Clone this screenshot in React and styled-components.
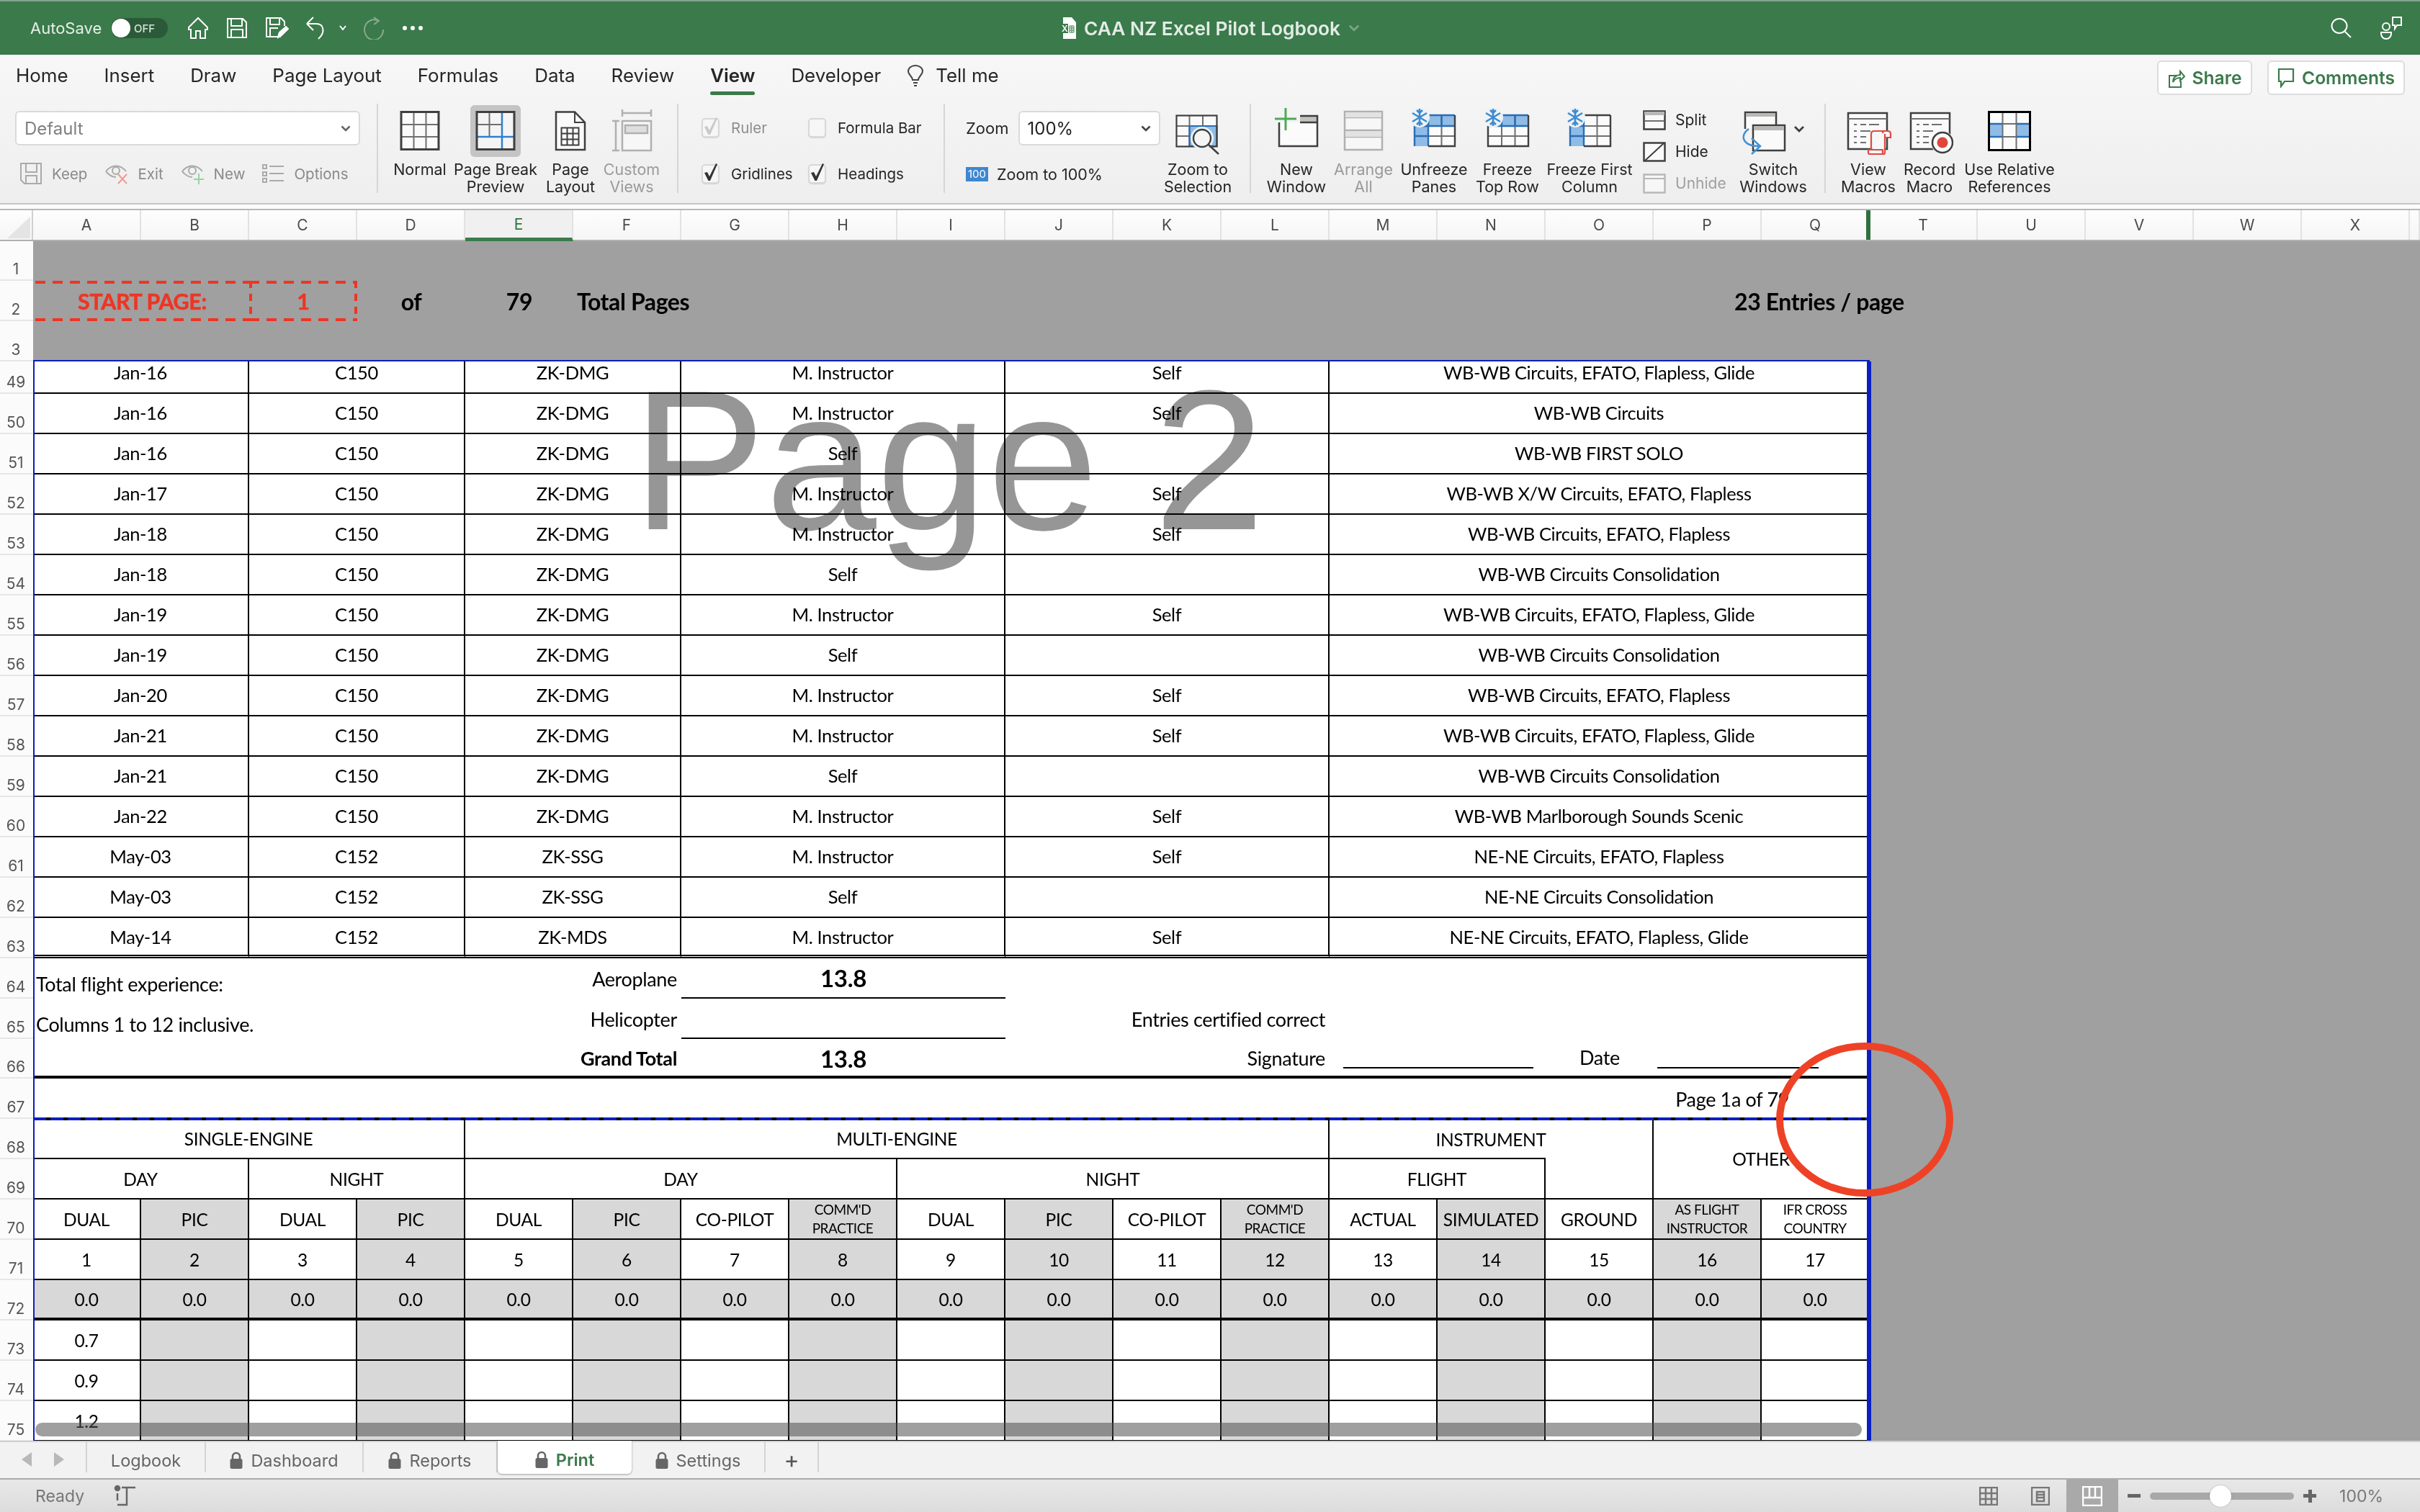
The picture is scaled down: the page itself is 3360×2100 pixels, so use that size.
import React from 'react'
import styled, {createGlobalStyle} from 'styled-components'

const GlobalStyle = createGlobalStyle`
  html, body { margin: 0; padding: 0; background: #a0a0a0; }
  body { font-family: Inter, "Liberation Sans", sans-serif; }
  * { box-sizing: border-box; }
`

const Page = styled.div`
  width: 3360px;
  height: 2100px;
  display: flex;
  flex-direction: column;
  overflow: hidden;
`

/* title bar */
const TitleBar = styled.div`
  height: 76px;
  flex: none;
  background: #3b7a4b;
  border-top: 2px solid #86a38e;
  display: grid;
  grid-template-columns: 1fr auto 1fr;
  align-items: center;
  color: #fff;
`
const TitleLeft = styled.div`
  display: flex;
  align-items: center;
  padding-left: 42px;
`
const AutoSave = styled.span`
  font-size: 22px;
  width: 112px;
  color: #e6efe8;
`
const Toggle = styled.div`
  width: 79px;
  height: 28px;
  border-radius: 14px;
  background: #2b5a39;
  display: flex;
  align-items: center;
  gap: 5px;
  font-size: 15px;
  font-weight: 500;
  color: #d5e2d8;
  margin-right: 27px;
  &::before {
    content: '';
    width: 26px;
    height: 26px;
    margin-left: 1px;
    border-radius: 50%;
    background: #fff;
  }
`
const QuickIcon = styled.svg`
  display: block;
  margin-right: ${p => p.$mr || 0}px;
  fill: none;
  stroke: ${p => p.$dim ? '#86ab90' : '#fff'};
  stroke-width: 2;
`
const TitleCenter = styled.div`
  display: flex;
  align-items: center;
  gap: 11px;
  font-size: 26.3px;
  font-weight: 600;
  color: #e3ece5;
`
const TitleRight = styled.div`
  display: flex;
  justify-content: flex-end;
  align-items: center;
  gap: 40px;
  padding-right: 25px;
`

/* ribbon */
const Ribbon = styled.div`
  height: 216px;
  flex: none;
  background: linear-gradient(#f7f7f7, #eeeeee);
  border-bottom: 2px solid #b8b8b8;
  box-shadow: inset 0 -6px 0 #fbfbfb, inset 0 -8px 0 #c6c6c6;
`
const TabRow = styled.div`
  height: 68px;
  display: flex;
  padding: 0 21px 0 22px;
  gap: 50px;
`
const RibbonTab = styled.div`
  padding-top: 14px;
  font-size: 25.9px;
  line-height: 30px;
  color: #262626;
  font-weight: ${p => p.$active ? 600 : 400};
  white-space: nowrap;
  &::after {
    content: '';
    display: ${p => p.$active ? 'block' : 'none'};
    height: 5px;
    margin-top: 7px;
    border-radius: 3px;
    background: #3b7a4b;
  }
`
const TellMe = styled(RibbonTab)`
  display: flex;
  gap: 16px;
  margin-left: -14px;
`
const ShareArea = styled.div`
  margin-left: auto;
  display: flex;
  gap: 21px;
  padding-top: 8px;
`
const ShareButton = styled.div`
  width: ${p => p.$w}px;
  height: 48px;
  display: flex;
  align-items: center;
  justify-content: center;
  gap: 10px;
  background: #fff;
  border: 2px solid #dcdcdc;
  border-radius: 6px;
  color: #3b7a4b;
  font-size: 24.6px;
  font-weight: 600;
`
const GroupRow = styled.div`
  height: 124px;
  display: flex;
  padding-left: 21px;
`
const Separator = styled.div`
  width: 2px;
  height: 124px;
  flex: none;
  background: #d6d6d6;
  margin: 0 ${p => p.$r || 0}px 0 ${p => p.$l || 0}px;
`
const ViewsGroup = styled.div`
  width: 479px;
  padding-top: 10px;
`
const SelectBox = styled.div`
  width: ${p => p.$w}px;
  height: 48px;
  display: flex;
  align-items: center;
  justify-content: space-between;
  padding: 0 11px;
  background: #fff;
  border: 2px solid #dadada;
  border-radius: 6px;
  font-size: 24px;
  color: ${p => p.$muted ? '#808080' : '#222'};
`
const MiniRow = styled.div`
  display: flex;
  align-items: center;
  height: 30px;
  margin-top: 24px;
  padding-left: 7px;
  font-size: 20.5px;
  color: #8a8a8a;
`
const MiniLabel = styled.span`
  margin: 0 ${p => p.$r}px 0 ${p => p.$l}px;
`
const RibbonButton = styled.div`
  width: ${p => p.$w}px;
  flex: none;
  padding-top: 2px;
  display: flex;
  flex-direction: column;
  align-items: center;
  font-size: 21.5px;
  line-height: 24px;
  text-align: center;
  white-space: nowrap;
  color: ${p => p.$muted ? '#9a9a9a' : '#262626'};
`
const IconSlot = styled.div`
  height: 72px;
  margin-bottom: 5px;
  padding: 0 ${p => p.$active ? 7 : 0}px;
  border-radius: 6px;
  background: ${p => p.$active ? '#c4c4c4' : 'transparent'};
  display: flex;
  justify-content: center;
`
const CheckColumn = styled.div`
  width: ${p => p.$w}px;
  padding-top: 20px;
  display: flex;
  flex-direction: column;
  gap: 37px;
`
const CheckRow = styled.div`
  height: 27px;
  display: flex;
  align-items: center;
  gap: 16px;
  font-size: 20.5px;
  color: ${p => p.$muted ? '#8e8e8e' : '#262626'};
`
const CheckBox = styled.div`
  width: 25px;
  height: 27px;
  flex: none;
  position: relative;
  background: #f6f6f6;
  border: 2px solid #d8d8d8;
  border-radius: 5px;
  box-shadow: 0 1px 1px rgba(0, 0, 0, .12);
`
const CheckMark = styled.svg`
  position: absolute;
  left: 0;
  top: -3px;
  fill: ${p => p.$muted ? '#c8c8c8' : '#333'};
`
const ZoomColumn = styled.div`
  width: 272px;
  padding-top: 10px;
`
const ZoomTop = styled.div`
  display: flex;
  align-items: center;
  gap: 13px;
  font-size: 22px;
  color: #262626;
`
const ZoomReset = styled.div`
  margin-top: 30px;
  display: flex;
  align-items: center;
  gap: 12px;
  font-size: 21.5px;
  line-height: 20px;
  color: #262626;
`
const HundredBadge = styled.span`
  width: 31px;
  height: 20px;
  background: #3e87cf;
  color: #fff;
  font-size: 15px;
  text-align: center;
`
const WindowColumn = styled.div`
  width: 134px;
  margin-left: 9px;
  padding-top: 9px;
  display: flex;
  flex-direction: column;
  gap: 17px;
`
const WindowItem = styled.div`
  height: 27px;
  display: flex;
  align-items: center;
  gap: 13px;
  font-size: 21px;
  color: ${p => p.$muted ? '#a0a0a0' : '#262626'};
`

/* column headers */
const ColumnHeader = styled.div`
  height: 43px;
  flex: none;
  display: flex;
  background: linear-gradient(#fdfdfd, #f6f6f6);
  border-bottom: 2px solid #b0b0b0;
`
const Corner = styled.div`
  width: 46px;
  flex: none;
  border-right: 2px solid #d0d0d0;
  padding: 9px 2px 0 10px;
`
const ColumnCell = styled.div`
  width: ${p => p.$w ? `${p.$w}px` : '150px'};
  flex: ${p => p.$w ? '1' : 'none'};
  position: relative;
  display: flex;
  align-items: center;
  justify-content: center;
  font-size: 21px;
  color: ${p => p.$active ? '#2f7040' : '#4a4a4a'};
  background: ${p => p.$active ? '#f0f0f0' : 'transparent'};
  border-right: 2px solid #e2e2e2;
  border-bottom: ${p => p.$active ? '5px solid #3b7a4b' : 'none'};
  margin-bottom: ${p => p.$active ? '-2px' : 0};
  &::after {
    content: '';
    display: ${p => p.$edge ? 'block' : 'none'};
    position: absolute;
    right: -3px;
    top: 0;
    bottom: 0;
    width: 6px;
    background: #2f7040;
  }
`

/* sheet */
const Sheet = styled.div`
  flex: 1;
  min-height: 0;
  position: relative;
  display: flex;
  overflow: hidden;
  background: #a0a0a0;
`
const RowHeader = styled.div`
  width: 46px;
  flex: none;
  background: #fbfbfb;
`
const RowLabel = styled.div`
  height: ${p => p.$h}px;
  display: flex;
  align-items: flex-end;
  justify-content: center;
  padding-bottom: 1px;
  padding-right: 2px;
  font-size: 21px;
  line-height: 27px;
  color: #555;
  border-bottom: 2px solid #e6e6e6;
`
const SheetBody = styled.div`
  width: 2550px;
  flex: none;
  font-family: Lato, "Liberation Sans", sans-serif;
  font-size: 24.5px;
  color: #000;
`
const FrozenPane = styled.div`
  height: 167px;
  display: grid;
  grid-template-columns: repeat(17, 150px);
  grid-template-rows: 55px 56px 56px;
  background: #a0a0a0;
  border-bottom: 2px solid #0a1fc0;
  font-weight: 700;
  font-size: 32px;
  letter-spacing: -0.4px;
  white-space: nowrap;
`
const FrozenItem = styled.div`
  grid-row: 2;
  grid-column: span ${p => p.$span || 1};
  display: flex;
  align-items: center;
  justify-content: ${p => p.$left ? 'flex-start' : 'center'};
  padding-left: ${p => p.$pad || 0}px;
`
const RedBox = styled(FrozenItem)`
  color: #ee3524;
  font-size: 30.5px;
  -webkit-text-stroke: 0.5px #ee3524;
  background-image:
    repeating-linear-gradient(90deg, #ee3524 0 14px, transparent 14px 24px),
    repeating-linear-gradient(90deg, #ee3524 0 14px, transparent 14px 24px),
    repeating-linear-gradient(180deg, #ee3524 0 10px, transparent 10px 18px),
    repeating-linear-gradient(180deg, #ee3524 0 10px, transparent 10px 18px);
  background-repeat: no-repeat;
  background-size: 100% 4px, 100% 4px, 4px 100%, 4px 100%;
  background-position: top, bottom, left, right;
`
const RedBoxOpen = styled(RedBox)`
  margin-left: 3px;
  background-size: 100% 4px, 100% 4px, 0 0, 0 0;
`
const PrintArea = styled.div`
  position: relative;
  display: grid;
  grid-template-columns: repeat(17, 150px);
  grid-template-rows: 45px repeat(14, 56px) 56px 56px 55px repeat(9, 56px);
  background: #fff;
  letter-spacing: -0.35px;
  &::before {
    content: '';
    position: absolute;
    left: 0;
    top: 0;
    bottom: 0;
    width: 2px;
    background: #0a1fc0;
  }
  &::after {
    content: '';
    position: absolute;
    right: -2px;
    top: 0;
    bottom: 0;
    width: 6px;
    background: #0a1fc0;
  }
`
const bottomBorders = {
  thin: '2px solid #000',
  double: '5px double #000',
  thick: '4px solid #000',
  none: 'none',
}
const Cell = styled.div`
  grid-column: span ${p => p.$span || 1};
  grid-row: span ${p => p.$rows || 1};
  display: flex;
  align-items: ${p => p.$end ? 'flex-end' : 'center'};
  justify-content: ${p => p.$justify || 'center'};
  padding: ${p => p.$pad || 0};
  background: ${p => p.$shade ? '#d8d8d8' : 'transparent'};
  border-right: ${p => p.$open ? 'none' : '2px solid #000'};
  border-bottom: ${p => bottomBorders[p.$b || 'thin']};
  box-shadow: ${p => p.$topLine ? '0 -2px 0 #000' : 'none'};
  font-weight: ${p => p.$bold ? 700 : 400};
  font-size: ${p => p.$big ? '33px' : p.$large ? '27px' : 'inherit'};
  white-space: nowrap;
  text-align: center;
  min-width: 0;
`
const LogText = styled.span`
  font-size: 25.5px;
  letter-spacing: -0.4px;
  line-height: 56px;
  margin-bottom: ${p => p.$last ? '-3px' : 0};
`
const SmallHeading = styled.span`
  font-size: 19px;
  line-height: 26px;
  white-space: pre-line;
  letter-spacing: -0.5px;
`
const PageBreakCell = styled(Cell)`
  position: relative;
  &::after {
    content: '';
    position: absolute;
    left: 0;
    right: 0;
    bottom: -2px;
    height: 4px;
    background: repeating-linear-gradient(90deg, #0a1fc0 0 18px, #000 18px 24px);
  }
`
const WriteLine = styled.div`
  width: ${p => p.$w}px;
  height: 2px;
  flex: none;
  margin: 0 ${p => p.$r || 0}px 10px 0;
  background: #000;
`
const DateLabel = styled.span`
  width: 108px;
  flex: none;
  align-self: center;
  text-align: left;
`
const Watermark = styled.div`
  position: absolute;
  left: 832px;
  top: -1px;
  font-family: "Liberation Sans", Arial, sans-serif;
  font-size: 277px;
  line-height: 277px;
  letter-spacing: 0;
  color: #969696;
  mix-blend-mode: multiply;
  pointer-events: none;
  white-space: nowrap;
`
const ScrollThumb = styled.div`
  position: absolute;
  left: 49px;
  width: 2536px;
  bottom: 6px;
  height: 19px;
  border-radius: 10px;
  background: rgba(80, 80, 80, 0.55);
`
const RedRing = styled.div`
  position: absolute;
  left: 2466px;
  top: 1113px;
  width: 246px;
  height: 214px;
  border: 10px solid #ee4227;
  border-radius: 50%;
`

/* sheet tabs */
const TabStrip = styled.div`
  height: 54px;
  flex: none;
  display: flex;
  background: #f2f2f2;
  border-top: 2px solid #d0d0d0;
  border-bottom: 2px solid #ababab;
  font-size: 23.5px;
  color: #666;
`
const TabArrows = styled.div`
  width: 121px;
  display: flex;
  align-items: center;
  gap: 31px;
  padding: 6px 0 0 30px;
  border-right: 2px solid #d4d4d4;
  height: 42px;
`
const SheetTab = styled.div`
  width: ${p => p.$w}px;
  height: ${p => p.$active ? '46px' : '42px'};
  margin-top: ${p => p.$active ? '-2px' : 0};
  padding-top: ${p => p.$active ? '6px' : '8px'};
  display: flex;
  align-items: center;
  justify-content: center;
  gap: 11px;
  border-right: ${p => p.$active ? 'none' : '2px solid #d4d4d4'};
  background: ${p => p.$active ? '#fff' : 'transparent'};
  border-radius: ${p => p.$active ? '0 0 6px 6px' : 0};
  box-shadow: ${p => p.$active ? '0 1px 3px rgba(0,0,0,.35)' : 'none'};
  color: ${p => p.$active ? '#3b7a4b' : '#666'};
  font-weight: ${p => p.$active ? 600 : 400};
`
const AddTab = styled.div`
  width: 74px;
  height: 42px;
  padding-top: 6px;
  display: flex;
  align-items: center;
  justify-content: center;
  border-right: 2px solid #d4d4d4;
  font-size: 32px;
  color: #555;
`

/* status bar */
const StatusBar = styled.div`
  height: 45px;
  flex: none;
  display: flex;
  align-items: center;
  padding: 0 51px 0 49px;
  background: linear-gradient(#e8e8e8, #dcdcdc);
  font-size: 23px;
  color: #777;
`
const StatusIcon = styled.svg`
  margin-left: 41px;
  fill: none;
  stroke: #666;
  stroke-width: 2.5;
`
const ViewSwitch = styled.div`
  width: 72px;
  height: 45px;
  display: flex;
  align-items: center;
  justify-content: center;
  background: ${p => p.$active ? '#a9a9a9' : 'transparent'};
  margin-left: ${p => p.$first ? 'auto' : 0};
  svg { fill: none; stroke: ${p => p.$active ? '#fff' : '#777'}; stroke-width: 2.5; }
`
const ZoomGlyph = styled.div`
  width: 18px;
  height: 18px;
  margin-left: 13px;
  flex: none;
  background:
    linear-gradient(#666, #666) center / 18px 5px no-repeat,
    linear-gradient(#666, #666) center / ${p => p.$plus ? '5px 18px' : '0 0'} no-repeat;
`
const ZoomTrack = styled.div`
  width: 200px;
  height: 10px;
  margin-left: 13px;
  position: relative;
  border-radius: 5px;
  background: #a8a8a8;
  &::after {
    content: '';
    position: absolute;
    left: 83px;
    top: -10px;
    width: 30px;
    height: 30px;
    border-radius: 50%;
    background: #fff;
    box-shadow: 0 0 2px rgba(0,0,0,.3);
  }
`
const ZoomValue = styled.span`
  margin-left: 32px;
`

const DARK = '#3f3f3f'
const GREY = '#6f6f6f'
const BLUE = '#2a6db5'
const LIGHTBLUE = '#8fbce6'

const Chevron = ({color = '#444', w = 14, h = 9}) => (
  <svg width={w} height={h} viewBox="0 0 14 9" fill="none" stroke={color} strokeWidth="2.6"><path d="M1.5 1.5 7 7l5.5-5.5" /></svg>
)
const Tick = ({muted}) => (
  <CheckMark $muted={muted} width="21" height="25" viewBox="0 0 21 25"><path d="M2 13l4-1 3 6L18 0l2 1-10 23H7.500z" /></CheckMark>
)

const NormalIcon = () => (
  <svg width="56" height="72" viewBox="0 0 56 72" fill="none">
    <rect x="2" y="9.500" width="52" height="52" fill="#fafafa" />
    <path d="M19.500 9.500v52M36.500 9.500v52M2 27h52M2 44h52" stroke={GREY} strokeWidth="2" />
    <rect x="2" y="9.500" width="52" height="52" stroke={DARK} strokeWidth="3" />
  </svg>
)
const PageBreakIcon = () => (
  <svg width="56" height="72" viewBox="0 0 56 72" fill="none">
    <rect x="2" y="9.500" width="52" height="52" fill="#f4f4f4" />
    <path d="M19.500 9.500V44M2 27h35" stroke={GREY} strokeWidth="2" />
    <path d="M37 9.500v52M2 44h52" stroke="#2f7fd0" strokeWidth="2.500" />
    <rect x="2" y="9.500" width="52" height="52" stroke={DARK} strokeWidth="3" />
  </svg>
)
const PageLayoutIcon = () => (
  <svg width="44" height="72" viewBox="0 0 44 72" fill="none" stroke={DARK}>
    <path d="M2 9.500h26L42 24v38H2z" fill="#fafafa" strokeWidth="2.500" />
    <path d="M28 9.500V24h14" strokeWidth="2" />
    <path d="M9.500 31.500h24v24h-24zM17.500 31.500v24M25.500 31.500v24M9.500 39.500h24M9.500 47.500h24" strokeWidth="2" />
  </svg>
)
const CustomViewsIcon = () => (
  <svg width="58" height="72" viewBox="0 0 58 72" fill="none" stroke="#b0b0b0" strokeWidth="2.500">
    <path d="M16 6v10M56 6v10M16 11h40M2 22h10M7 22v41M2 63h10" />
    <rect x="16" y="22" width="40" height="41" fill="#f7f7f7" />
    <rect x="20" y="28" width="31" height="11" fill="#dedede" />
  </svg>
)
const ZoomSelectionIcon = () => (
  <svg width="62" height="72" viewBox="0 0 62 72" fill="none">
    <rect x="1.500" y="14.500" width="56" height="43" fill="#fafafa" />
    <rect x="19" y="29" width="38" height="28" fill={LIGHTBLUE} />
    <path d="M19.500 14v43M38 14v15M1.500 29h56M1.500 43h18" stroke={GREY} strokeWidth="2" />
    <path d="M19.500 29h38v28h-38z" stroke={BLUE} strokeWidth="2.200" />
    <rect x="1.500" y="14.500" width="56" height="43" stroke={DARK} strokeWidth="2.200" />
    <circle cx="37" cy="46" r="16" fill="#eaf2fa" />
    <circle cx="37" cy="46" r="12" fill="#f5f5f5" stroke={DARK} strokeWidth="2.400" />
    <path d="M46 55l14 13" stroke={DARK} strokeWidth="2.400" />
  </svg>
)
const NewWindowIcon = () => (
  <svg width="62" height="72" viewBox="0 0 62 72" fill="none">
    <path d="M6 24h54v33H6z" fill="#fbfbfb" />
    <rect x="36" y="14" width="24" height="9" fill="#c2c2c0" />
    <path d="M36 15h24v42H7V24M36 24h24" stroke={DARK} strokeWidth="2.500" />
    <path d="M16 4v31M1 19h30" stroke="#4caa57" strokeWidth="3" />
  </svg>
)
const ArrangeIcon = () => (
  <svg width="56" height="72" viewBox="0 0 56 72" fill="none" stroke="#b0b0b0" strokeWidth="2.500">
    <rect x="2" y="9" width="52" height="53" fill="#f7f7f7" />
    <path d="M2 17h52M2 35h52M2 44h52" />
    <rect x="3" y="10" width="50" height="7" fill="#e2e2e2" stroke="none" />
    <rect x="3" y="36" width="50" height="8" fill="#e2e2e2" stroke="none" />
  </svg>
)
const Snowflake = ({cx, cy}) => (
  <g>
    <circle cx={cx} cy={cy} r="14" fill="#eef2f6" />
    <path d={`M${cx} ${cy - 12}v24M${cx - 10} ${cy - 6}l20 12M${cx - 10} ${cy + 6}l20-12M${cx - 4} ${cy - 10}l4 4 4-4M${cx - 4} ${cy + 10}l4-4 4 4`} stroke="#3d8bcf" strokeWidth="2.600" fill="none" />
  </g>
)
const FreezeIcon = ({top, left}) => (
  <svg width="62" height="72" viewBox="0 0 62 72" fill="none">
    <rect x="4" y="14" width="56" height="43" fill="#fbfbfb" />
    {top && <rect x="4" y="14" width="56" height="15" fill={LIGHTBLUE} />}
    {left && <rect x="4" y="14" width="19" height="43" fill={LIGHTBLUE} />}
    <path d="M23 14v43M41.500 14v43M4 29h56M4 43h56" stroke={GREY} strokeWidth="2" />
    {top && <path d="M4 29h56M23 14v15M41.500 14v15M4 14h56" stroke={BLUE} strokeWidth="2.400" />}
    {left && <path d="M23 14v43M4 29h19M4 43h19M4 14v43" stroke={BLUE} strokeWidth="2.400" />}
    <path d="M23 57h37V14" stroke={DARK} strokeWidth="2.400" />
    {top && !left && <path d="M4 29v28h19" stroke={DARK} strokeWidth="2.400" />}
    {left && !top && <path d="M23 14h37" stroke={DARK} strokeWidth="2.400" />}
    <Snowflake cx={11} cy={17} />
  </svg>
)
const SplitIcon = () => (
  <svg width="32" height="28" viewBox="0 0 32 28" fill="none" stroke={DARK} strokeWidth="2.500">
    <rect x="1.500" y="1.500" width="29" height="25" fill="#fafafa" />
    <rect x="2" y="2" width="28" height="5" fill="#b8b8b6" stroke="none" />
    <path d="M2 15h28" stroke={GREY} strokeWidth="2" />
  </svg>
)
const HideIcon = () => (
  <svg width="32" height="28" viewBox="0 0 32 28" fill="none" stroke={DARK} strokeWidth="2.500">
    <rect x="1.500" y="1.500" width="29" height="25" fill="#fafafa" />
    <path d="M3 26 29 2" strokeWidth="2" />
  </svg>
)
const UnhideIcon = () => (
  <svg width="32" height="28" viewBox="0 0 32 28" fill="none" stroke="#b8b8b8" strokeWidth="2.500">
    <rect x="1.500" y="1.500" width="29" height="25" fill="#f7f7f7" />
    <path d="M2 7h28" strokeWidth="2" />
  </svg>
)
const SwitchWindowsIcon = () => (
  <svg width="92" height="72" viewBox="0 0 92 72" fill="none">
    <path d="M7 33V10h43v18" fill="#fafafa" stroke={DARK} strokeWidth="2.500" />
    <rect x="8" y="11" width="41" height="5" fill="#b8b8b6" />
    <rect x="18" y="28" width="44" height="35" fill="#fafafa" stroke={DARK} strokeWidth="2.500" />
    <rect x="19" y="29" width="42" height="6" fill="#b8b8b6" />
    <path d="M12 33C-1 42 3 57 27 57M16 46l12 11-12 11" stroke="#4292d4" strokeWidth="2.500" />
    <path d="M76 30l6 6 6-6" stroke={DARK} strokeWidth="2.800" />
  </svg>
)
const SheetLines = () => (
  <path d="M1 19h54M9 27h4M18 27h8M30 27h14M9 36h4M18 36h14M9 44h4M18 44h8M9 52h4M18 52h8" stroke={GREY} strokeWidth="2" />
)
const ViewMacrosIcon = () => (
  <svg width="66" height="72" viewBox="0 0 66 72" fill="none">
    <g transform="translate(4 0)">
      <path d="M1 11h54v50H1z" fill="#fafafa" stroke={DARK} strokeWidth="2.500" />
      <SheetLines />
    </g>
    <path d="M37 62V40c0-2.500 1-4 4-4h19c2.500 0 4 1.500 4 4v5h-8M37 62H33v4c0 1 1 2 2 2h19c1 0 2-1 2-2V40M55 36c-1 0-2 1-2 3M33 62h20v5" fill="#f6f6f6" stroke="#dd4b42" strokeWidth="2.200" />
  </svg>
)
const RecordMacroIcon = () => (
  <svg width="66" height="72" viewBox="0 0 66 72" fill="none">
    <g transform="translate(6 0)">
      <path d="M1 11h54v50H1z" fill="#fafafa" stroke={DARK} strokeWidth="2.500" />
      <SheetLines />
    </g>
    <circle cx="51" cy="52" r="16" fill="#f2f2f2" />
    <circle cx="51" cy="52" r="14" fill="#fafafa" stroke={DARK} strokeWidth="2.500" />
    <circle cx="51" cy="52" r="7.500" fill="#e0453c" />
  </svg>
)
const RelativeIcon = () => (
  <svg width="60" height="72" viewBox="0 0 60 72" fill="none">
    <rect x="1.500" y="9.500" width="57" height="53" fill="#fbfbfb" />
    <rect x="1.500" y="26" width="19" height="18" fill={LIGHTBLUE} />
    <rect x="39.500" y="26" width="19" height="18" fill={LIGHTBLUE} />
    <path d="M20.500 9.500v53M39.500 9.500v53" stroke={GREY} strokeWidth="2" />
    <path d="M1.500 26h19M39.500 26h19M1.500 44h19M39.500 44h19" stroke={BLUE} strokeWidth="2.500" />
    <path d="M20.500 44h19M20.500 26h19" stroke={GREY} strokeWidth="2" />
    <rect x="1.500" y="9.500" width="57" height="53" stroke="#000" strokeWidth="3" />
  </svg>
)
const Lock = ({color = '#666'}) => (
  <svg width="18" height="26" viewBox="0 0 18 26" fill="none">
    <path d="M4 12V8a5 5 0 0 1 10 0v4" stroke={color} strokeWidth="2.500" />
    <rect x="0.500" y="11" width="17" height="14" rx="2.500" fill={color} />
  </svg>
)

const logRows = [
  ['Jan-16', 'C150', 'ZK-DMG', 'M. Instructor', 'Self', 'WB-WB Circuits, EFATO, Flapless, Glide'],
  ['Jan-16', 'C150', 'ZK-DMG', 'M. Instructor', 'Self', 'WB-WB Circuits'],
  ['Jan-16', 'C150', 'ZK-DMG', 'Self', '', 'WB-WB FIRST SOLO'],
  ['Jan-17', 'C150', 'ZK-DMG', 'M. Instructor', 'Self', 'WB-WB X/W Circuits, EFATO, Flapless'],
  ['Jan-18', 'C150', 'ZK-DMG', 'M. Instructor', 'Self', 'WB-WB Circuits, EFATO, Flapless'],
  ['Jan-18', 'C150', 'ZK-DMG', 'Self', '', 'WB-WB Circuits Consolidation'],
  ['Jan-19', 'C150', 'ZK-DMG', 'M. Instructor', 'Self', 'WB-WB Circuits, EFATO, Flapless, Glide'],
  ['Jan-19', 'C150', 'ZK-DMG', 'Self', '', 'WB-WB Circuits Consolidation'],
  ['Jan-20', 'C150', 'ZK-DMG', 'M. Instructor', 'Self', 'WB-WB Circuits, EFATO, Flapless'],
  ['Jan-21', 'C150', 'ZK-DMG', 'M. Instructor', 'Self', 'WB-WB Circuits, EFATO, Flapless, Glide'],
  ['Jan-21', 'C150', 'ZK-DMG', 'Self', '', 'WB-WB Circuits Consolidation'],
  ['Jan-22', 'C150', 'ZK-DMG', 'M. Instructor', 'Self', 'WB-WB Marlborough Sounds Scenic'],
  ['May-03', 'C152', 'ZK-SSG', 'M. Instructor', 'Self', 'NE-NE Circuits, EFATO, Flapless'],
  ['May-03', 'C152', 'ZK-SSG', 'Self', '', 'NE-NE Circuits Consolidation'],
  ['May-14', 'C152', 'ZK-MDS', 'M. Instructor', 'Self', 'NE-NE Circuits, EFATO, Flapless, Glide'],
]
const logSpans = [2, 2, 2, 3, 3, 5]

const columnHeads = ['DUAL', 'PIC', 'DUAL', 'PIC', 'DUAL', 'PIC', 'CO-PILOT', "COMM'D\nPRACTICE", 'DUAL', 'PIC', 'CO-PILOT', "COMM'D\nPRACTICE", 'ACTUAL', 'SIMULATED', 'GROUND', 'AS FLIGHT\nINSTRUCTOR', 'IFR CROSS\nCOUNTRY']
const seventeen = Array.from({length: 17}, (_, i) => i)

const rowLabels = [[1, 55], [2, 56], [3, 56]]
rowLabels.push([49, 45])
for (let n = 50; n <= 75; n++) rowLabels.push([n, n === 66 ? 55 : 56])

const columnLetters = ['A', 'B', 'C', 'D', 'E', 'F', 'G', 'H', 'I', 'J', 'K', 'L', 'M', 'N', 'O', 'P', 'Q', 'T', 'U', 'V', 'W', 'X']

const App = () => (
  <Page>
    <GlobalStyle />
    <TitleBar>
      <TitleLeft>
        <AutoSave>AutoSave</AutoSave>
        <Toggle>OFF</Toggle>
        <QuickIcon width="30" height="32" viewBox="0 0 30 32" $mr={25}><path d="M15 2 2 15v3h3v12h7V20h6v10h7V18h3v-3z" /></QuickIcon>
        <QuickIcon width="28" height="28" viewBox="0 0 28 28" $mr={26}><path d="M1 1h21l5 5v21H1zM6 1v10h15V1M6 27V16h16v11" /></QuickIcon>
        <QuickIcon width="32" height="30" viewBox="0 0 32 30" $mr={24}><path d="M21 27H1V1h20l5 5v6M6 1v9h13V1M6 27V15h11" /><path d="M17 27l2-6 9-8 3 3-9 9-5 3z" fill="#fff" /></QuickIcon>
        <QuickIcon width="26" height="32" viewBox="0 0 26 32" $mr={20}><path d="M1 10 10 1M1 10l9 9M2 10h12c11 0 13 12 3 21" /></QuickIcon>
        <QuickIcon width="10" height="8" viewBox="0 0 10 8" $mr={23}><path d="M1 1l4 5 4-5" /></QuickIcon>
        <QuickIcon width="30" height="32" viewBox="0 0 30 32" $mr={25} $dim><path d="M21 6A13 14 0 1 0 28 18M15 1l7 5-7 5" /></QuickIcon>
        <QuickIcon width="28" height="6" viewBox="0 0 28 6"><g fill="#fff" stroke="none"><circle cx="3" cy="3" r="3" /><circle cx="14" cy="3" r="3" /><circle cx="25" cy="3" r="3" /></g></QuickIcon>
      </TitleLeft>
      <TitleCenter>
        <svg width="22" height="30" viewBox="0 0 22 30">
          <path d="M4 0h12l6 7v23H4z" fill="#fff" />
          <rect x="0" y="9" width="11" height="13" fill="#3b7a4b" />
          <text x="2" y="20" fontSize="12" fill="#fff" fontFamily="Inter">X</text>
          <path d="M13 12h6v9h-6zM13 15h6M13 18h6M16 12v9" stroke="#3b7a4b" strokeWidth="1" fill="none" />
        </svg>
        CAA NZ Excel Pilot Logbook
        <Chevron color="#7da388" w={16} h={10} />
      </TitleCenter>
      <TitleRight>
        <QuickIcon width="29" height="28" viewBox="0 0 29 28"><ellipse cx="12" cy="11" rx="10.500" ry="10" /><path d="M19 18l9 9" /></QuickIcon>
        <QuickIcon width="30" height="32" viewBox="0 0 30 32"><circle cx="8" cy="14" r="5" /><path d="M1 22h14v2a7 7 0 0 1-14 0zM17 1h12v11h-6l-3 5v-5h-3z" /></QuickIcon>
      </TitleRight>
    </TitleBar>

    <Ribbon>
      <TabRow>
        {['Home', 'Insert', 'Draw', 'Page Layout', 'Formulas', 'Data', 'Review'].map(t => <RibbonTab key={t}>{t}</RibbonTab>)}
        <RibbonTab $active>View</RibbonTab>
        <RibbonTab>Developer</RibbonTab>
        <TellMe>
          <svg width="24" height="30" viewBox="0 0 24 30" fill="none" stroke="#444" strokeWidth="2"><path d="M8 21c0-5-6-7-6-12a10 8 0 0 1 20 0c0 5-6 7-6 12zM9 25h6M10 29h4" /></svg>
          Tell me
        </TellMe>
        <ShareArea>
          <ShareButton $w={132}>
            <svg width="24" height="28" viewBox="0 0 24 28" fill="none" stroke="#3b7a4b" strokeWidth="2"><path d="M12 11H2v16h16v-8M7 20c0-7 5-10 10-10V5l6 7-6 6v-4c-5 0-8 2-10 6z" /></svg>
            Share
          </ShareButton>
          <ShareButton $w={191}>
            <svg width="24" height="28" viewBox="0 0 24 28" fill="none" stroke="#3b7a4b" strokeWidth="2.200"><path d="M2 2h20v17H10l-5 7v-7H2z" /></svg>
            Comments
          </ShareButton>
        </ShareArea>
      </TabRow>
      <GroupRow>
        <ViewsGroup>
          <SelectBox $w={479} $muted>Default<Chevron color="#666" /></SelectBox>
          <MiniRow>
            <svg width="30" height="30" viewBox="0 0 30 30" fill="none" stroke="#aaa" strokeWidth="2"><path d="M1 1h28v28H6l-5-5zM8 1v12h15V1M8 29V18h15v11" /></svg>
            <MiniLabel $l={14} $r={25}>Keep</MiniLabel>
            <svg width="34" height="30" viewBox="0 0 34 30" fill="none" stroke="#aaa" strokeWidth="2"><path d="M1 12c8-10 20-10 28 0M1 12c5 6 10 8 14 8" /><circle cx="15" cy="11" r="5" /><path d="M18 16l12 13M30 16 18 29" stroke="#ee9a94" /></svg>
            <MiniLabel $l={11} $r={25}>Exit</MiniLabel>
            <svg width="33" height="30" viewBox="0 0 33 30" fill="none" stroke="#aaa" strokeWidth="2"><path d="M1 12c8-10 20-10 28 0M1 12c5 6 10 8 14 8" /><circle cx="15" cy="11" r="5" /><path d="M24 15v15M17 23h14" stroke="#97d39e" /></svg>
            <MiniLabel $l={12} $r={24}>New</MiniLabel>
            <svg width="30" height="26" viewBox="0 0 30 26" fill="none" stroke="#aaa" strokeWidth="2"><path d="M1 1h5v5H1zM1 11h5v5H1zM1 20h5v5H1zM10 3h20M10 13h20M10 23h20" /></svg>
            <MiniLabel $l={14} $r={0}>Options</MiniLabel>
          </MiniRow>
        </ViewsGroup>
        <Separator $l={23} $r={20} />
        <RibbonButton $w={76}><IconSlot><NormalIcon /></IconSlot>Normal</RibbonButton>
        <RibbonButton $w={134}><IconSlot $active><PageBreakIcon /></IconSlot>Page Break<br />Preview</RibbonButton>
        <RibbonButton $w={74}><IconSlot><PageLayoutIcon /></IconSlot>Page<br />Layout</RibbonButton>
        <RibbonButton $w={96} $muted><IconSlot><CustomViewsIcon /></IconSlot>Custom<br />Views</RibbonButton>
        <Separator $l={15} $r={32} />
        <CheckColumn $w={148}>
          <CheckRow $muted><CheckBox><Tick muted /></CheckBox>Ruler</CheckRow>
          <CheckRow><CheckBox><Tick /></CheckBox>Gridlines</CheckRow>
        </CheckColumn>
        <CheckColumn $w={188}>
          <CheckRow><CheckBox />Formula Bar</CheckRow>
          <CheckRow><CheckBox><Tick /></CheckBox>Headings</CheckRow>
        </CheckColumn>
        <Separator $r={29} />
        <ZoomColumn>
          <ZoomTop>Zoom<SelectBox $w={197}>100%<Chevron /></SelectBox></ZoomTop>
          <ZoomReset><HundredBadge>100</HundredBadge>Zoom to 100%</ZoomReset>
        </ZoomColumn>
        <RibbonButton $w={100}><IconSlot><ZoomSelectionIcon /></IconSlot>Zoom to<br />Selection</RibbonButton>
        <Separator $l={22} $r={15} />
        <RibbonButton $w={96}><IconSlot><NewWindowIcon /></IconSlot>New<br />Window</RibbonButton>
        <RibbonButton $w={90} $muted><IconSlot><ArrangeIcon /></IconSlot>Arrange<br />All</RibbonButton>
        <RibbonButton $w={106}><IconSlot><FreezeIcon top left /></IconSlot>Unfreeze<br />Panes</RibbonButton>
        <RibbonButton $w={98}><IconSlot><FreezeIcon top /></IconSlot>Freeze<br />Top Row</RibbonButton>
        <RibbonButton $w={130}><IconSlot><FreezeIcon left /></IconSlot>Freeze First<br />Column</RibbonButton>
        <WindowColumn>
          <WindowItem><SplitIcon />Split</WindowItem>
          <WindowItem><HideIcon />Hide</WindowItem>
          <WindowItem $muted><UnhideIcon />Unhide</WindowItem>
        </WindowColumn>
        <RibbonButton $w={94}><IconSlot><SwitchWindowsIcon /></IconSlot>Switch<br />Windows</RibbonButton>
        <Separator $l={24} $r={19} />
        <RibbonButton $w={80}><IconSlot><ViewMacrosIcon /></IconSlot>View<br />Macros</RibbonButton>
        <RibbonButton $w={90}><IconSlot><RecordMacroIcon /></IconSlot>Record<br />Macro</RibbonButton>
        <RibbonButton $w={132}><IconSlot><RelativeIcon /></IconSlot>Use Relative<br />References</RibbonButton>
      </GroupRow>
    </Ribbon>

    <ColumnHeader>
      <Corner>
        <svg width="32" height="30" viewBox="0 0 32 30"><path d="M32 0v30H0z" fill="#e4e4e4" /></svg>
      </Corner>
      {columnLetters.map(c => <ColumnCell key={c} $active={c === 'E'} $edge={c === 'Q'}>{c}</ColumnCell>)}
      <ColumnCell $w={14} />
    </ColumnHeader>

    <Sheet>
      <RowHeader>
        {rowLabels.map(([n, h]) => <RowLabel key={n} $h={h}>{n}</RowLabel>)}
      </RowHeader>
      <SheetBody>
        <FrozenPane>
          <RedBoxOpen $span={2}>START PAGE:</RedBoxOpen>
          <RedBox>1</RedBox>
          <FrozenItem>of</FrozenItem>
          <FrozenItem>79</FrozenItem>
          <FrozenItem $left $pad={5}>Total Pages</FrozenItem>
          <FrozenItem $span={9} />
          <FrozenItem $left $pad={112}>23 Entries / page</FrozenItem>
        </FrozenPane>
        <PrintArea>
          {logRows.map((row, i) => row.map((text, j) => (
            <Cell key={`${i}-${j}`} $span={logSpans[j]} $end $b={i === logRows.length - 1 ? 'double' : 'thin'}>
              <LogText $last={i === logRows.length - 1}>{text}</LogText>
            </Cell>
          )))}

          <Cell $span={5} $large $open $b="none" $end $justify="flex-start" $pad="0 0 4px 4px">Total flight experience:</Cell>
          <Cell $open $large $b="none" $justify="flex-end" $pad="0 6px 0 0">Aeroplane</Cell>
          <Cell $span={3} $open $bold $big>13.8</Cell>
          <Cell $span={8} $open $b="none" />

          <Cell $span={5} $large $open $b="none" $end $justify="flex-start" $pad="0 0 4px 4px">Columns 1 to 12 inclusive.</Cell>
          <Cell $open $large $b="none" $justify="flex-end" $pad="0 6px 0 0">Helicopter</Cell>
          <Cell $span={3} $open />
          <Cell $span={3} $large $open $b="none" $justify="flex-end" $pad="0 6px 0 0">Entries certified correct</Cell>
          <Cell $span={5} $open $b="none" />

          <Cell $span={5} $open $b="thick" />
          <Cell $open $large $b="thick" $bold $justify="flex-end" $pad="2px 6px 0 0">Grand Total</Cell>
          <Cell $span={3} $open $b="thick" $bold $big $pad="2px 0 0 0">13.8</Cell>
          <Cell $span={3} $large $open $b="thick" $justify="flex-end" $pad="2px 6px 0 0">Signature</Cell>
          <Cell $span={5} $large $open $b="thick" $end $justify="flex-start" $pad="0 0 0 19px">
            <WriteLine $w={264} $r={64} />
            <DateLabel>Date</DateLabel>
            <WriteLine $w={224} />
          </Cell>

          <PageBreakCell $span={17} $large $open $b="none" $justify="flex-end" $pad="0 112px 0 0">Page 1a of 79</PageBreakCell>

          <Cell $span={4}>SINGLE-ENGINE</Cell>
          <Cell $span={8}>MULTI-ENGINE</Cell>
          <Cell $span={3} $b="none">INSTRUMENT</Cell>
          <Cell $span={2} $rows={2}>OTHER</Cell>

          <Cell $span={2}>DAY</Cell>
          <Cell $span={2}>NIGHT</Cell>
          <Cell $span={4}>DAY</Cell>
          <Cell $span={4}>NIGHT</Cell>
          <Cell $span={2} $topLine>FLIGHT</Cell>
          <Cell />

          {columnHeads.map((h, i) => (
            <Cell key={i} $shade={i % 2 === 1}>
              {h.includes('\n') ? <SmallHeading>{h}</SmallHeading> : h}
            </Cell>
          ))}
          {seventeen.map(i => <Cell key={i} $shade={i % 2 === 1}>{i + 1}</Cell>)}
          {seventeen.map(i => <Cell key={i} $shade $b="thick">0.0</Cell>)}
          {['0.7', '0.9', '1.2'].map(v => seventeen.map(i => (
            <Cell key={`${v}-${i}`} $shade={i % 2 === 1}>{i === 0 ? v : ''}</Cell>
          )))}

          <Watermark>Page 2</Watermark>
        </PrintArea>
      </SheetBody>
      <ScrollThumb />
      <RedRing />
    </Sheet>

    <TabStrip>
      <TabArrows>
        <svg width="14" height="20" viewBox="0 0 14 20"><path d="M14 0v20L0 10z" fill="#b8b8b8" /></svg>
        <svg width="14" height="20" viewBox="0 0 14 20"><path d="M0 0v20l14-10z" fill="#b8b8b8" /></svg>
      </TabArrows>
      <SheetTab $w={165}>Logbook</SheetTab>
      <SheetTab $w={219}><Lock />Dashboard</SheetTab>
      <SheetTab $w={186}><Lock />Reports</SheetTab>
      <SheetTab $w={186} $active><Lock />Print</SheetTab>
      <SheetTab $w={186}><Lock />Settings</SheetTab>
      <AddTab>+</AddTab>
    </TabStrip>

    <StatusBar>
      Ready
      <StatusIcon width="32" height="32" viewBox="0 0 32 32"><circle cx="5" cy="5" r="3" fill="#666" /><path d="M11 4h19M18 4v24H5M5 12v10" /></StatusIcon>
      <ViewSwitch $first>
        <svg width="26" height="26" viewBox="0 0 26 26"><path d="M1 1h24v24H1zM9 1v24M17 1v24M1 9h24M1 17h24" /></svg>
      </ViewSwitch>
      <ViewSwitch>
        <svg width="26" height="26" viewBox="0 0 26 26"><path d="M1 1h24v24H1zM8 7h10v13H8zM8 11h10M8 15h10" /></svg>
      </ViewSwitch>
      <ViewSwitch $active>
        <svg width="28" height="28" viewBox="0 0 28 28"><path d="M1 1h26v26H1zM1 16h26M10 1v15M18 1v15" /></svg>
      </ViewSwitch>
      <ZoomGlyph />
      <ZoomTrack />
      <ZoomGlyph $plus />
      <ZoomValue>100%</ZoomValue>
    </StatusBar>
  </Page>
)

export default App
